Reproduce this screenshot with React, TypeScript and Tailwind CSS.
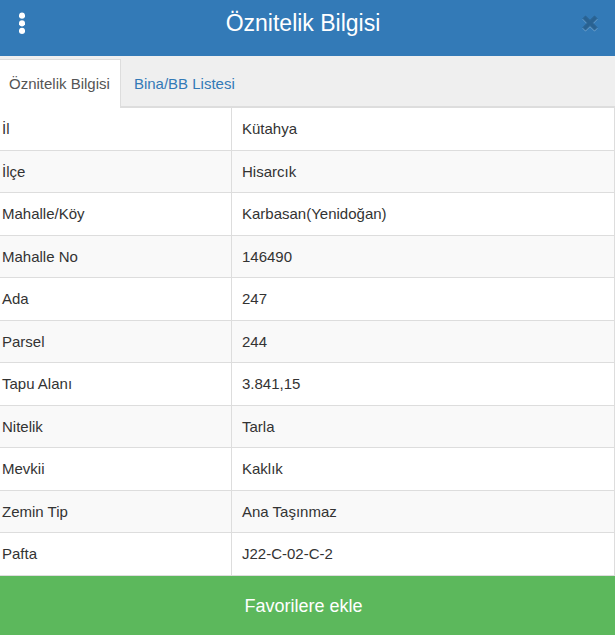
import React from "react";

const rows = [
  { label: "İl", value: "Kütahya" },
  { label: "İlçe", value: "Hisarcık" },
  { label: "Mahalle/Köy", value: "Karbasan(Yenidoğan)" },
  { label: "Mahalle No", value: "146490" },
  { label: "Ada", value: "247" },
  { label: "Parsel", value: "244" },
  { label: "Tapu Alanı", value: "3.841,15" },
  { label: "Nitelik", value: "Tarla" },
  { label: "Mevkii", value: "Kaklık" },
  { label: "Zemin Tip", value: "Ana Taşınmaz" },
  { label: "Pafta", value: "J22-C-02-C-2" },
];

const crossPath =
  "M3.5 1L8 5.4L12.5 1L15 3.5L10.6 8L15 12.5L12.5 15L8 10.6L3.5 15L1 12.5L5.4 8L1 3.5Z";

const Header = () => (
  <header className="flex h-14 items-start justify-between bg-[#337ab7] pr-[9px] pl-4 text-white">
    <button type="button" aria-label="Menü" className="mt-3 w-4 pl-[3px]">
      <svg viewBox="0 0 6 22" className="h-[22px] w-1.5" fill="currentColor">
        <circle cx="3" cy="3.7" r="3.1" />
        <circle cx="3" cy="11.3" r="3.1" />
        <circle cx="3" cy="18.9" r="3.1" />
      </svg>
    </button>
    <h1 className="pt-2 text-[23px] leading-[30px]">Öznitelik Bilgisi</h1>
    <button type="button" aria-label="Kapat" className="mt-[15px] flex w-8 justify-center">
      <svg viewBox="0 0 16 17" className="h-[17px] w-4" strokeWidth="1" strokeLinejoin="round">
        <path d={crossPath} transform="translate(0 1)" fill="#6b9fcb" stroke="#6b9fcb" />
        <path d={crossPath} fill="#296292" stroke="#296292" />
      </svg>
    </button>
  </header>
);

const Tabs = () => (
  <nav className="flex bg-[#efefef] pt-[3px]">
    <a
      href="#oznitelik"
      aria-current="page"
      className="border-t border-r border-[#ddd] bg-white pt-3 pr-2.5 pb-3 pl-[9px] leading-6 text-[#555]"
    >
      Öznitelik Bilgisi
    </a>
    <div className="flex-1 border-b-2 border-[#ddd] pt-[13px] pl-[13px] leading-6">
      <a href="#bina" className="text-[#337ab7]">
        Bina/BB Listesi
      </a>
    </div>
  </nav>
);

const Attributes = () => (
  <table className="w-full border-separate border-spacing-0 text-left">
    <tbody>
      {rows.map((row) => (
        <tr key={row.label} className="h-[42px] odd:h-[43px] even:bg-[#f9f9f9] last:h-[42px]">
          <th
            scope="row"
            className="w-[232px] border-r border-b border-[#ddd] pl-0.5 font-normal"
          >
            {row.label}
          </th>
          <td className="border-r border-b border-[#ddd] pl-2.5">{row.value}</td>
        </tr>
      ))}
    </tbody>
  </table>
);

const App = () => {
  return (
    <main className="flex min-h-screen flex-col bg-white font-['Liberation_Sans',Arial,sans-serif] text-[15px] leading-5 text-[#333]">
      <Header />
      <Tabs />
      <Attributes />
      <button
        type="button"
        className="min-h-[59px] flex-1 bg-[#5cb85c] pr-2 text-lg text-white"
      >
        Favorilere ekle
      </button>
    </main>
  );
};

export default App;
